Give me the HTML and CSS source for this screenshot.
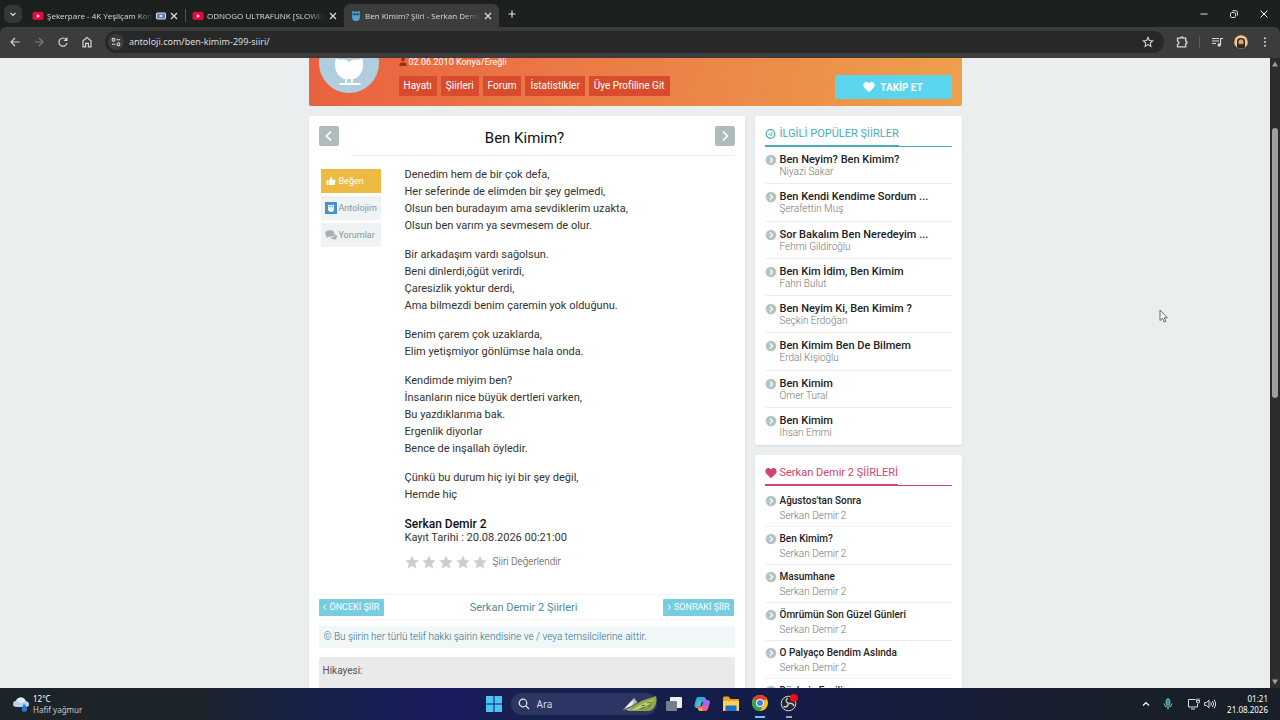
FILE: index.html
```html
<!DOCTYPE html>
<html lang="tr">
<head>
<meta charset="utf-8">
<title>Ben Kimim? Şiiri - Serkan Demir 2</title>
<link rel="stylesheet" href="styles.css">
</head>
<body>
<svg class="defs" aria-hidden="true">
  <symbol id="x" viewBox="0 0 10 10"><path d="M2 2l6 6M8 2l-6 6" fill="none" stroke="currentColor" stroke-width="1.2"/></symbol>
  <symbol id="yt" viewBox="0 0 12 12"><rect x="0.5" y="1.8" width="11" height="8.2" rx="2" fill="#e8063c"/><path d="M4.8 4l3.4 2-3.4 2z" fill="#fff"/></symbol>
  <symbol id="owl" viewBox="0 0 12 12"><path d="M2 1q2 1 4 0.6Q8 2 10 1l-0.400 3 0.400 3.500Q9.500 10.600 7.500 11h-3Q2.500 10.600 2 7.500L2.400 4z" fill="#4fa6d3"/><circle cx="4.500" cy="4.200" r="1.200" fill="#174b68"/><circle cx="7.500" cy="4.200" r="1.200" fill="#174b68"/></symbol>
  <symbol id="chev" viewBox="0 0 12 12"><circle cx="6" cy="6" r="5.300" fill="#b2c4c3"/><path d="M5 3.500L7.500 6 5 8.500" fill="none" stroke="#fff" stroke-width="1.200"/></symbol>
  <symbol id="heart" viewBox="0 0 12 12"><path d="M6 11.300L1.300 6.700C-0.600 4.600 0.500 1 3.300 1 4.600 1 5.500 1.700 6 2.500 6.500 1.700 7.400 1 8.700 1c2.800 0 3.900 3.600 2 5.700z" fill="currentColor"/></symbol>
  <symbol id="star" viewBox="0 0 14 14"><path d="M7 0.500l2 4.400 4.700 0.500-3.500 3.200 1 4.800L7 11l-4.200 2.400 1-4.800L0.300 5.400 5 4.900z" fill="#cdcdcd"/></symbol>
</svg>

<header class="browser">
  <div class="tabs">
    <button class="tab-list" aria-label="Sekmelerde ara"><svg class="i8" viewBox="0 0 8 8"><path d="M1.500 2.800L4 5.300l2.500-2.500" fill="none" stroke="#e4e4e4" stroke-width="1.200"/></svg></button>
    <div class="tab">
      <svg class="i12"><use href="#yt"/></svg><span class="tab-title">Şekerpare - 4K Yeşilçam Kom</span>
      <svg class="i10" viewBox="0 0 10 10"><rect x="0.500" y="2" width="9" height="6" rx="0.600" fill="#5a7fae" stroke="#d8e2f2"/><path d="M3.500 5h3" stroke="#fff" stroke-width="1.500"/></svg>
      <button class="close" aria-label="Kapat"><svg class="i10"><use href="#x"/></svg></button>
    </div>
    <div class="tab split">
      <svg class="i12"><use href="#yt"/></svg><span class="tab-title">ODNOGO ULTRAFUNK [SLOWED</span>
      <button class="close" aria-label="Kapat"><svg class="i10"><use href="#x"/></svg></button>
    </div>
    <div class="tab active">
      <svg class="i12"><use href="#owl"/></svg><span class="tab-title">Ben Kimim? Şiiri - Serkan Demir</span>
      <button class="close" aria-label="Kapat"><svg class="i10"><use href="#x"/></svg></button>
    </div>
    <button class="new-tab" aria-label="Yeni sekme"><svg class="i10" viewBox="0 0 10 10"><path d="M5 1.500v7M1.500 5h7" stroke="#e4e4e4" stroke-width="1.200"/></svg></button>
    <div class="window-controls">
      <button aria-label="Küçült"><svg class="i10" viewBox="0 0 10 10"><path d="M1.500 5h7" stroke="#ddd"/></svg></button>
      <button aria-label="Önceki boyut"><svg class="i10" viewBox="0 0 10 10"><rect x="1.500" y="3.500" width="5" height="5" rx="1.200" fill="none" stroke="#ddd"/><path d="M3.500 1.700h3.200q1.700 0 1.700 1.700v3.200" fill="none" stroke="#ddd"/></svg></button>
      <button aria-label="Kapat"><svg class="i10" viewBox="0 0 10 10"><path d="M1.500 1.500l7 7M8.500 1.500l-7 7" stroke="#fff"/></svg></button>
    </div>
  </div>
  <div class="toolbar">
    <div class="nav">
      <button aria-label="Geri"><svg class="i12" viewBox="0 0 12 12"><path d="M10.500 6h-8.500M6 2L2 6l4 4" fill="none" stroke="#d6d6d6" stroke-width="1.200"/></svg></button>
      <button aria-label="İleri"><svg class="i12" viewBox="0 0 12 12"><path d="M1.500 6h8.500M6 2l4 4-4 4" fill="none" stroke="#7d7d7d" stroke-width="1.200"/></svg></button>
      <button aria-label="Yenile"><svg class="i12" viewBox="0 0 12 12"><path d="M10 7.200A4.100 4.100 0 1 1 9.300 3.600" fill="none" stroke="#d6d6d6" stroke-width="1.200"/><path d="M10.500 1v4h-4z" fill="#d6d6d6"/></svg></button>
      <button aria-label="Ana sayfa"><svg class="i12" viewBox="0 0 12 12"><path d="M2 4.800L6 1.600l4 3.200v6H7.400V7.300H4.600v3.500H2z" fill="none" stroke="#d6d6d6" stroke-width="1.200"/></svg></button>
    </div>
    <div class="omnibox">
      <button class="site-info" aria-label="Site bilgileri"><svg class="i10" viewBox="0 0 10 10" fill="none" stroke="#dcdcdc" stroke-width="1.100"><circle cx="2.500" cy="2.800" r="1.400"/><path d="M5.500 2.800h3.500M1 7.200h3.500"/><circle cx="7.500" cy="7.200" r="1.400"/></svg></button>
      <input class="url" type="text" aria-label="Adres" value="antoloji.com/ben-kimim-299-siiri/">
      <button aria-label="Yer işareti"><svg class="i12" viewBox="0 0 14 14"><path d="M7 1.600l1.600 3.600 3.900 0.400-2.900 2.600 0.800 3.900L7 10.100l-3.400 2 0.800-3.900-2.900-2.600 3.900-0.400z" fill="none" stroke="#dcdcdc" stroke-width="1.200"/></svg></button>
    </div>
    <div class="actions">
      <button aria-label="Uzantılar"><svg class="i12" viewBox="0 0 12 12"><path d="M1.500 2.200h3.200q0-1.200 1.200-1.200t1.200 1.200H9.700v3q1.300 0 1.300 1.200T9.700 7.600v3.200H1.500V8.300q1.400-0.300 1.400-1.600T1.500 5.100z" fill="none" stroke="#d6d6d6" stroke-width="1.300"/></svg></button>
      <span class="rule"></span>
      <button aria-label="Medya"><svg class="i12" viewBox="0 0 12 12"><path d="M1 2.500h7M1 5h7M1 7.500h4M9.500 9V2.500H12" fill="none" stroke="#d6d6d6" stroke-width="1.200"/><circle cx="8.200" cy="9" r="1.700" fill="#d6d6d6"/></svg></button>
      <button aria-label="Profil"><svg class="i14" viewBox="0 0 14 14"><circle cx="7" cy="7" r="6.800" fill="#ecc98d"/><path d="M3 12.200V6q0-3 4-3t4 3v6.200Q7 15 3 12.200z" fill="#33241f"/><ellipse cx="7" cy="7.400" rx="2.600" ry="3.200" fill="#d9a184"/><path d="M4.700 8.500q2.300 1 4.600 0v2q-2.300 2-4.600 0z" fill="#46302a"/></svg></button>
      <button aria-label="Menü"><svg class="i12" viewBox="0 0 12 12" fill="#d6d6d6"><circle cx="6" cy="2.200" r="1"/><circle cx="6" cy="6" r="1"/><circle cx="6" cy="9.800" r="1"/></svg></button>
    </div>
  </div>
</header>

<div class="viewport">
  <main class="page">
    <div class="site">
      <section class="poet">
        <svg class="avatar" viewBox="0 0 60 48"><circle cx="30" cy="5" r="30" fill="#b0cede"/><path d="M17 0Q18.500 2 23 1.500 28 1 30 4q2-3 7-2.500 4.500 0.500 6-1.500 2 6 0.500 11-1.500 7-8.500 10h-10q-7-3-8.500-10Q15 6 17 0z" fill="#fff"/><path d="M27 20v6M33 20v6M20.500 26h21" stroke="#fff" stroke-width="1.800"/><path d="M28.500 0h3L30 2.500z" fill="#b0cede"/></svg>
        <div class="poet-info">
          <p class="birth"><svg class="i8" viewBox="0 0 8 8" fill="#9c2b1b"><circle cx="4" cy="1.500" r="1.800"/><path d="M0.500 8V5.500Q4 3 7.500 5.500V8z"/></svg>02.06.2010 Konya/Ereğli</p>
          <nav class="poet-nav"><a href="#">Hayatı</a><a href="#">Şiirleri</a><a href="#">Forum</a><a href="#">İstatistikler</a><a href="#">Üye Profiline Git</a></nav>
        </div>
        <button class="follow"><svg class="i12"><use href="#heart"/></svg>TAKİP ET</button>
      </section>

      <div class="columns">
        <article class="card poem-card">
          <div class="poem-head">
            <button class="arrow" aria-label="Önceki"><svg class="i12" viewBox="0 0 12 12"><path d="M8 1.500L3.500 6 8 10.500" fill="none" stroke="#fff" stroke-width="1.700"/></svg></button>
            <h1>Ben Kimim?</h1>
            <button class="arrow" aria-label="Sonraki"><svg class="i12" viewBox="0 0 12 12"><path d="M4 1.500L8.500 6 4 10.500" fill="none" stroke="#fff" stroke-width="1.700"/></svg></button>
          </div>
          <div class="poem-body">
            <div class="share">
              <button class="like"><svg class="i10" viewBox="0 0 10 10" fill="#fff"><path d="M0.500 4.500h2V9h-2zM3 4.500L5 0.800q1.500 0 1.200 3h3.200L9 8.500 8.300 9H3z"/></svg>Beğen</button>
              <button><svg class="i12" viewBox="0 0 12 12"><rect width="12" height="12" fill="#3c97c6"/><path d="M3 2.500q1.500 1 3 0.500 1.500 0.500 3-0.500v5Q8.500 10 6 10T3 7.500z" fill="#fff"/><circle cx="4.800" cy="4.700" r="0.800" fill="#3c97c6"/><circle cx="7.200" cy="4.700" r="0.800" fill="#3c97c6"/></svg>Antolojim</button>
              <button><svg class="i12" viewBox="0 0 12 12" fill="#a5b1b3"><ellipse cx="4.800" cy="4.500" rx="4.600" ry="3.300"/><path d="M1 9l1-3 2 1.500zM10 5q2 1 2 2.500T11 9.500l0.700 1.500-2.200-0.800Q6 10.500 5 8.800 9.500 8.500 10 5z"/></svg>Yorumlar</button>
            </div>
            <div class="poem">
              <p>Denedim hem de bir çok defa,<br>Her seferinde de elimden bir şey gelmedi,<br>Olsun ben buradayım ama sevdiklerim uzakta,<br>Olsun ben varım ya sevmesem de olur.</p>
              <p>Bir arkadaşım vardı sağolsun.<br>Beni dinlerdi,öğüt verirdi,<br>Çaresizlik yoktur derdi,<br>Ama bilmezdi benim çaremin yok olduğunu.</p>
              <p>Benim çarem çok uzaklarda,<br>Elim yetişmiyor gönlümse hala onda.</p>
              <p>Kendimde miyim ben?<br>İnsanların nice büyük dertleri varken,<br>Bu yazdıklarıma bak.<br>Ergenlik diyorlar<br>Bence de inşallah öyledir.</p>
              <p>Çünkü bu durum hiç iyi bir şey değil,<br>Hemde hiç</p>
              <h2>Serkan Demir 2</h2>
              <div class="date">Kayıt Tarihi : 20.08.2026 00:21:00</div>
              <div class="rating">
                <button aria-label="1 yıldız"><svg class="i14"><use href="#star"/></svg></button><button aria-label="2 yıldız"><svg class="i14"><use href="#star"/></svg></button><button aria-label="3 yıldız"><svg class="i14"><use href="#star"/></svg></button><button aria-label="4 yıldız"><svg class="i14"><use href="#star"/></svg></button><button aria-label="5 yıldız"><svg class="i14"><use href="#star"/></svg></button>
                <span>Şiiri Değerlendir</span>
              </div>
            </div>
          </div>
          <nav class="pager">
            <a class="step" href="#"><svg class="i8" viewBox="0 0 8 8"><path d="M5 1.500L2.500 4 5 6.500" fill="none" stroke="#fff"/></svg>ÖNCEKİ ŞİİR</a>
            <a class="all" href="#">Serkan Demir 2 Şiirleri</a>
            <a class="step" href="#"><svg class="i8" viewBox="0 0 8 8"><path d="M3 1.500L5.500 4 3 6.500" fill="none" stroke="#fff"/></svg>SONRAKİ ŞİİR</a>
          </nav>
          <p class="rights">© Bu şiirin her türlü telif hakkı şairin kendisine ve / veya temsilcilerine aittir.</p>
          <section class="story">Hikayesi:</section>
        </article>

        <aside class="side">
          <section class="card flush">
            <h3 class="teal"><span><svg class="i12" viewBox="0 0 12 12"><circle cx="5.500" cy="6" r="4.300" fill="none" stroke="currentColor" stroke-width="1.200"/><path d="M3.500 6.300h2L7.500 4M5.500 7.500l2-0.800" stroke="currentColor" fill="none"/></svg>İLGİLİ POPÜLER ŞİİRLER</span></h3>
            <ul class="popular">
              <li><svg class="i12"><use href="#chev"/></svg><div><a href="#">Ben Neyim? Ben Kimim?</a><small>Niyazi Sakar</small></div></li>
              <li><svg class="i12"><use href="#chev"/></svg><div><a href="#">Ben Kendi Kendime Sordum ...</a><small>Şerafettin Muş</small></div></li>
              <li><svg class="i12"><use href="#chev"/></svg><div><a href="#">Sor Bakalım Ben Neredeyim ...</a><small>Fehmi Gildiroğlu</small></div></li>
              <li><svg class="i12"><use href="#chev"/></svg><div><a href="#">Ben Kim İdim, Ben Kimim</a><small>Fahri Bulut</small></div></li>
              <li><svg class="i12"><use href="#chev"/></svg><div><a href="#">Ben Neyim Ki, Ben Kimim ?</a><small>Seçkin Erdoğan</small></div></li>
              <li><svg class="i12"><use href="#chev"/></svg><div><a href="#">Ben Kimim Ben De Bilmem</a><small>Erdal Kişioğlu</small></div></li>
              <li><svg class="i12"><use href="#chev"/></svg><div><a href="#">Ben Kimim</a><small>Ömer Tural</small></div></li>
              <li><svg class="i12"><use href="#chev"/></svg><div><a href="#">Ben Kimim</a><small>İhsan Emmi</small></div></li>
            </ul>
          </section>
          <section class="card">
            <h3 class="pink"><span><svg class="i12"><use href="#heart"/></svg>Serkan Demir 2 ŞİİRLERİ</span></h3>
            <ul class="own">
              <li><svg class="i12"><use href="#chev"/></svg><div><a href="#">Ağustos'tan Sonra</a><small>Serkan Demir 2</small></div></li>
              <li><svg class="i12"><use href="#chev"/></svg><div><a href="#">Ben Kimim?</a><small>Serkan Demir 2</small></div></li>
              <li><svg class="i12"><use href="#chev"/></svg><div><a href="#">Masumhane</a><small>Serkan Demir 2</small></div></li>
              <li><svg class="i12"><use href="#chev"/></svg><div><a href="#">Ömrümün Son Güzel Günleri</a><small>Serkan Demir 2</small></div></li>
              <li><svg class="i12"><use href="#chev"/></svg><div><a href="#">O Palyaço Bendim Aslında</a><small>Serkan Demir 2</small></div></li>
              <li><svg class="i12"><use href="#chev"/></svg><div><a href="#">Düşlerin Ezgili</a><small>Serkan Demir 2</small></div></li>
            </ul>
          </section>
        </aside>
      </div>
    </div>
  </main>
  <div class="scrollbar">
    <svg class="i8" viewBox="0 0 8 8"><path d="M4 1.500L7 6.500H1z" fill="#9f9f9f"/></svg>
    <div class="track"><div class="thumb"></div></div>
    <svg class="i8" viewBox="0 0 8 8"><path d="M4 6.500L7 1.500H1z" fill="#9f9f9f"/></svg>
  </div>
  <svg class="pointer" viewBox="0 0 9 14"><path d="M1 1v10.500l2.500-2.200 1.700 3.700 1.600-0.700-1.600-3.500H8.300z" fill="#fff" stroke="#444" stroke-width="0.800"/></svg>
</div>

<footer class="taskbar">
  <div class="weather">
    <svg class="i18" viewBox="0 0 18 18"><path d="M4.500 12Q1 12 1 9t3.200-3.200Q5.500 2.500 9 2.500t4.800 3.800Q17 6.500 17 9.200T14 12z" fill="#b9d2f2"/><path d="M4.200 5.800Q5.500 2.500 9 2.500t4.800 3.800L9 8z" fill="#dfeafa"/><path d="M12 8.500q3 4 3 5.700a2.600 2.600 0 0 1-5.200 0q0-1.700 2.200-5.700z" fill="#2478d8"/></svg>
    <div>12°C<br><span>Hafif yağmur</span></div>
  </div>
  <div class="apps">
    <button aria-label="Başlat"><svg class="i16" viewBox="0 0 16 16" fill="#4cc4f4"><path d="M0 0h7.500v7.500H0zM8.500 0H16v7.500H8.500zM0 8.500h7.500V16H0zM8.500 8.500H16V16H8.500z"/></svg></button>
    <label class="search"><svg class="i12" viewBox="0 0 12 12"><circle cx="5" cy="5" r="3.800" fill="none" stroke="#e8ebf4" stroke-width="1.200"/><path d="M7.800 7.800l3.200 3.200" stroke="#e8ebf4" stroke-width="1.200"/></svg><input type="text" placeholder="Ara" aria-label="Ara"><svg class="art" viewBox="0 0 34 16"><path d="M0 14L7 6l4-4 4 5 2 7z" fill="#aab4bd"/><path d="M2 12l6-6 3-2-2 5-3 2z" fill="#f0f2f3"/><path d="M4 15L18 5 33 0q2 7-3 13-2 2-5 2z" fill="#8fa845"/><path d="M9 14l10-6 12-5-6 6-8 5z" fill="#c8cf7b"/><path d="M12 14l9-3 10-5-4 7-4 2z" fill="#8da04a"/><path d="M18 10l4-1M24 7l4-1M17 13l5-2M25 11l3-2" stroke="#57782e"/><path d="M1 14q8-3 15-8" fill="none" stroke="#3c4940"/></svg></label>
    <button aria-label="Görev görünümü"><svg class="i16" viewBox="0 0 16 16"><rect x="4" y="1" width="12" height="11" rx="1" fill="#eceef2"/><rect x="0" y="5" width="11" height="10" rx="1" fill="#777d8c"/></svg></button>
    <button aria-label="Copilot"><svg class="i16" viewBox="0 0 16 16"><path d="M4 1h6q1.500 0 2 2l1 3H8L6 12H3q-3 0-2.500-3Q2 1 4 1z" fill="#31a6e9"/><path d="M3.500 5L2 12h1q2 0 2.500-2L7 4z" fill="#55c988"/><path d="M12 15H6q-1.500 0-2-2l-1-3h5l2-6h3q3 0 2.500 3Q14 15 12 15z" fill="#ed5b8b"/><path d="M8 10l2-6h3q3 0 2.500 3l-1 3z" fill="#a566e8"/><path d="M4 12h5l-1 3H6q-1.500 0-2-3z" fill="#f3a54b"/></svg></button>
    <button aria-label="Dosya Gezgini"><svg class="i18" viewBox="0 0 18 18"><path d="M1 3q0-1.500 1.500-1.500h4L8.500 4H16q1 0 1 1v11H1z" fill="#e7a51d"/><path d="M1 6h16v9.500H1z" fill="#ffd05a"/><path d="M3.500 10.500h11v5.500h-11z" fill="#1675c8"/></svg></button>
    <button class="running current" aria-label="Chrome"><svg class="i16" viewBox="0 0 16 16"><circle cx="8" cy="8" r="8" fill="#fbc116"/><path d="M8 8L1.100 4A8 8 0 0 1 14.900 4z" fill="#e33b2e"/><path d="M1.100 4A8 8 0 0 0 8 16l3.500-6L8 8z" fill="#2ba24c"/><circle cx="8" cy="8" r="4" fill="#fff"/><circle cx="8" cy="8" r="3" fill="#3b7de9"/></svg></button>
    <button class="running" aria-label="OBS"><svg class="i18" viewBox="0 0 18 18"><circle cx="8.500" cy="9.500" r="7.300" fill="#23252b" stroke="#d5d5d8"/><path d="M8.500 9.500q-4-2-1-5.500M8.500 9.500q4-1 5.500 2.500M8.500 9.500q-1 4.500-5 3" fill="none" stroke="#c5c5c8" stroke-width="1.500"/><circle cx="14" cy="4" r="4" fill="#f20d16"/></svg></button>
  </div>
  <div class="tray">
    <svg class="i10" viewBox="0 0 10 10"><path d="M2 6.500l3-3 3 3" fill="none" stroke="#fff" stroke-width="1.200"/></svg>
    <svg class="i12 mic" viewBox="0 0 12 12"><rect x="4.200" y="0.800" width="3.600" height="6.500" rx="1.800" fill="#3d7f94" stroke="#79c3d8"/><path d="M2.200 5.500q0 3.700 3.800 3.700t3.800-3.700M6 9.200v2.300" fill="none" stroke="#79c3d8"/></svg>
    <div class="system">
      <svg class="i12" viewBox="0 0 12 12"><path d="M7.500 1.500h-7v7.500h9V6M3 11h4M9 0.500v2M11 0.500v2M8.500 2.500h3v1.500q0 1-1.500 1t-1.500-1z" fill="none" stroke="#ddd"/></svg>
      <svg class="i12" viewBox="0 0 12 12"><path d="M0.600 4.500h2L5 2.200v7.600L2.600 7.500h-2zM6.700 4.300q1.300 1.700 0 3.400M8.400 3q2.400 3 0 6M10 1.700q3.300 4.300 0 8.600" fill="none" stroke="#ddd"/></svg>
    </div>
    <div class="clock">01:21<br>21.08.2026</div>
  </div>
</footer>
</body>
</html>
```
FILE: styles.css
```css
* { box-sizing: border-box; }
body { margin: 0; height: 100vh; display: flex; flex-direction: column; overflow: hidden; font-family: Roboto, "Liberation Sans", sans-serif; background: #ebeeef; color: #333; }
button { font: inherit; color: inherit; background: none; border: 0; padding: 0; display: flex; align-items: center; justify-content: center; }
input { font: inherit; color: inherit; background: none; border: 0; padding: 0; min-width: 0; outline: 0; }
a { color: inherit; text-decoration: none; }
p, h1, h2, h3, ul { margin: 0; padding: 0; }
svg { display: block; flex: none; }
.defs { position: absolute; width: 0; height: 0; }
.i8 { width: 8px; height: 8px; }
.i10 { width: 10px; height: 10px; }
.i12 { width: 12px; height: 12px; }
.i14 { width: 14px; height: 14px; }
.i16 { width: 16px; height: 16px; }
.i18 { width: 18px; height: 18px; }

/* Browser frame */
.browser { flex: none; background: #1c201f; color: #dedede; font-family: "Noto Sans", sans-serif; }
.tabs { display: flex; align-items: center; height: 27px; padding-left: 4px; }
.tab-list { width: 18px; height: 18px; border-radius: 6px; background: #343837; margin-right: 4px; }
.tab { display: flex; align-items: center; gap: 3px; width: 159px; height: 23px; align-self: flex-end; padding: 0 6px; font-family: "Open Sans", sans-serif; font-size: 8px; }
.tab.split { border-left: 1px solid transparent; border-image: linear-gradient(transparent 25%, #555 25%, #555 75%, transparent 75%) 1; }
.tab.active { background: #3c3c3c; border-radius: 6px 6px 0 0; width: 155px; }
.tab-title { flex: 1; min-width: 0; white-space: nowrap; overflow: hidden; mask-image: linear-gradient(to right, #000 85%, transparent); }
.new-tab { margin-left: 8px; }
.window-controls { margin-left: auto; display: flex; gap: 20px; padding-right: 11px; }
.toolbar { display: flex; align-items: center; height: 31px; padding: 0 9px 2px; background: #3c3c3c; border-radius: 6px 6px 0 0; }
.nav { display: flex; gap: 12px; margin-right: 12px; }
.omnibox { flex: 1; display: flex; align-items: center; height: 22px; border-radius: 11px; background: #282828; padding: 0 10px 0 3px; }
.site-info { width: 16px; height: 16px; border-radius: 8px; background: #3c3c3c; margin-right: 5px; }
.url { flex: 1; font-size: 9px; }
.actions { display: flex; align-items: center; gap: 11px; margin-left: 12px; }
.rule { width: 1px; height: 12px; background: #5c5c5c; }

/* Page */
.viewport { flex: 1; min-height: 0; display: flex; position: relative; }
.pointer { position: absolute; top: 251px; right: 112px; width: 9px; height: 14px; }
.page { flex: 1; min-width: 0; overflow: hidden; }
.site { max-width: 653px; margin: 0 auto; }
.poet { display: flex; height: 48px; padding: 0 10px; gap: 20px; border-radius: 0 0 2px 2px; background: linear-gradient(100deg, #e9613f, #ec8248 55%, #eda04b); color: #fff; }
.avatar { width: 60px; height: 48px; }
.birth { display: flex; align-items: center; gap: 2px; font-size: 9px; line-height: 8px; height: 8px; }
.poet-info { flex: 1; }
.poet-nav { display: flex; gap: 4px; margin-top: 10px; font-size: 10px; line-height: 20px; }
.poet-nav a { background: #d84b2c; padding: 0 5px; }
.follow { width: 117px; height: 24px; gap: 5px; margin-top: 17px; background: #5bd5ee; font-size: 10px; font-weight: 700; border-radius: 1px; }
.columns { display: flex; gap: 10px; margin-top: 10px; align-items: flex-start; }
.card { background: #fff; border-radius: 2px; box-shadow: 0 1px 2px #d4d9da; padding: 10px; }
.card.flush { padding-bottom: 0; }
.poem-card { flex: 1; }
.poem-head { display: flex; justify-content: space-between; height: 30px; background: linear-gradient(#eee, #eee) right bottom / calc(100% - 32px) 1px no-repeat; }
.poem-head h1 { flex: 1; padding-right: 4px; text-align: center; font-size: 15px; line-height: 25px; font-weight: 400; color: #111; }
.arrow { width: 20px; height: 20px; background: #b0bcbc; border-radius: 2px; }
.poem-body { display: flex; gap: 24px; padding: 10px 0 25px 2px; }
.share { width: 60px; display: flex; flex-direction: column; gap: 3px; padding-top: 3px; }
.share button { height: 24px; justify-content: flex-start; gap: 2px; padding-left: 4px; background: #eff3f4; color: #8b9396; font-size: 9px; }
.share .like { background: #edbb42; color: #fff; gap: 3px; padding-left: 5px; }
.poem { font-size: 11px; line-height: 17px; }
.poem p { margin-bottom: 12px; }
.poem h2 { font-size: 12px; line-height: 14px; margin-top: 14px; font-weight: 500; color: #111; }
.date { line-height: 14px; }
.rating { display: flex; align-items: center; gap: 3px; margin-top: 10px; font-size: 10px; line-height: 14px; color: #444; font-weight: 300; }
.rating span { margin-left: 3px; }
.pager { display: flex; justify-content: space-between; align-items: center; height: 26px; border-top: 1px solid #f5f5f5; border-bottom: 1px solid #f5f5f5; }
.step { display: flex; align-items: center; gap: 1px; height: 17px; padding: 0 5px 0 2px; background: #76cde0; color: #fff; font-size: 9px; border-radius: 1px; }
.all { font-size: 11px; color: #508a9b; }
.rights { margin: 6px 0 9px; padding: 0 5px; line-height: 22px; background: #f1f6f8; color: #35707f; font-size: 10px; font-weight: 300; }
.story { min-height: 90px; padding: 7px 4px; background: #eaeaea; border-radius: 2px; font-size: 10px; line-height: 14px; color: #555; }
.side { width: 207px; display: flex; flex-direction: column; gap: 10px; }
h3 { display: flex; height: 21px; font-size: 11px; line-height: 16px; font-weight: 400; border-bottom: 1px solid; }
h3 span { display: flex; gap: 3px; height: 21px; border-bottom: 2px solid; }
h3 svg { margin-top: 2px; }
.teal { color: #48abbb; }
.pink { color: #d1446f; }
.side ul { list-style: none; display: grid; grid-auto-rows: 1fr; }
.side li { display: flex; gap: 3px; border-bottom: 1px solid #eee; font-size: 11px; line-height: 12px; padding-top: 7px; }
.side li:last-child { border-bottom: 0; }
.side li a { display: block; font-weight: 500; color: #222; }
.side small { display: block; font-size: 10px; font-weight: 300; color: #777; }
.popular { min-height: 298px; }
.side .own { padding-top: 3px; }
.side .own li { min-height: 38px; font-size: 10px; padding-top: 6px; }
.own small { margin-top: 3px; }
.scrollbar { width: 10px; padding: 2px 1px; background: #2c2c2c; display: flex; flex-direction: column; align-items: center; }
.track { flex: 1; padding-top: 60px; }
.thumb { width: 6px; height: 49%; border-radius: 3px; background: #9f9f9f; }

/* Taskbar */
.taskbar { flex: none; height: 32px; display: grid; grid-template-columns: 1fr auto 1fr; align-items: center; color: #fff; font: 8px/11px "Noto Sans", sans-serif; background: linear-gradient(to right, #1c2329 15%, #15224a 25%, #1a1b60 35%, #15214c 42%, #141c48 62%, #171e38 75%, #181f28 88%); }
.weather { display: flex; align-items: center; gap: 3px; padding-left: 12px; }
.weather span { color: #c4cad0; }
.apps { display: flex; align-items: center; gap: 12px; padding-left: 3px; }
.search { display: flex; align-items: center; gap: 7px; width: 146px; height: 22px; margin: 0 -3px; padding: 0 0 0 7px; background: #2c3564; border-radius: 11px; font-size: 10px; }
.search input { flex: 1; }
.search input::placeholder { color: #d4d8e8; opacity: 1; }
.art { width: 34px; height: 16px; }
.running { height: 28px; border-bottom: 2px solid transparent; border-image: linear-gradient(to right, transparent 35%, #9aa3b5 35%, #9aa3b5 65%, transparent 65%) 1; }
.current { border-image: linear-gradient(to right, transparent 20%, #62c5f5 20%, #62c5f5 80%, transparent 80%) 1; }
.tray { display: flex; justify-content: flex-end; align-items: center; gap: 11px; padding-right: 12px; }
.system { display: flex; gap: 4px; margin-left: 3px; }
.clock { text-align: right; }
```
